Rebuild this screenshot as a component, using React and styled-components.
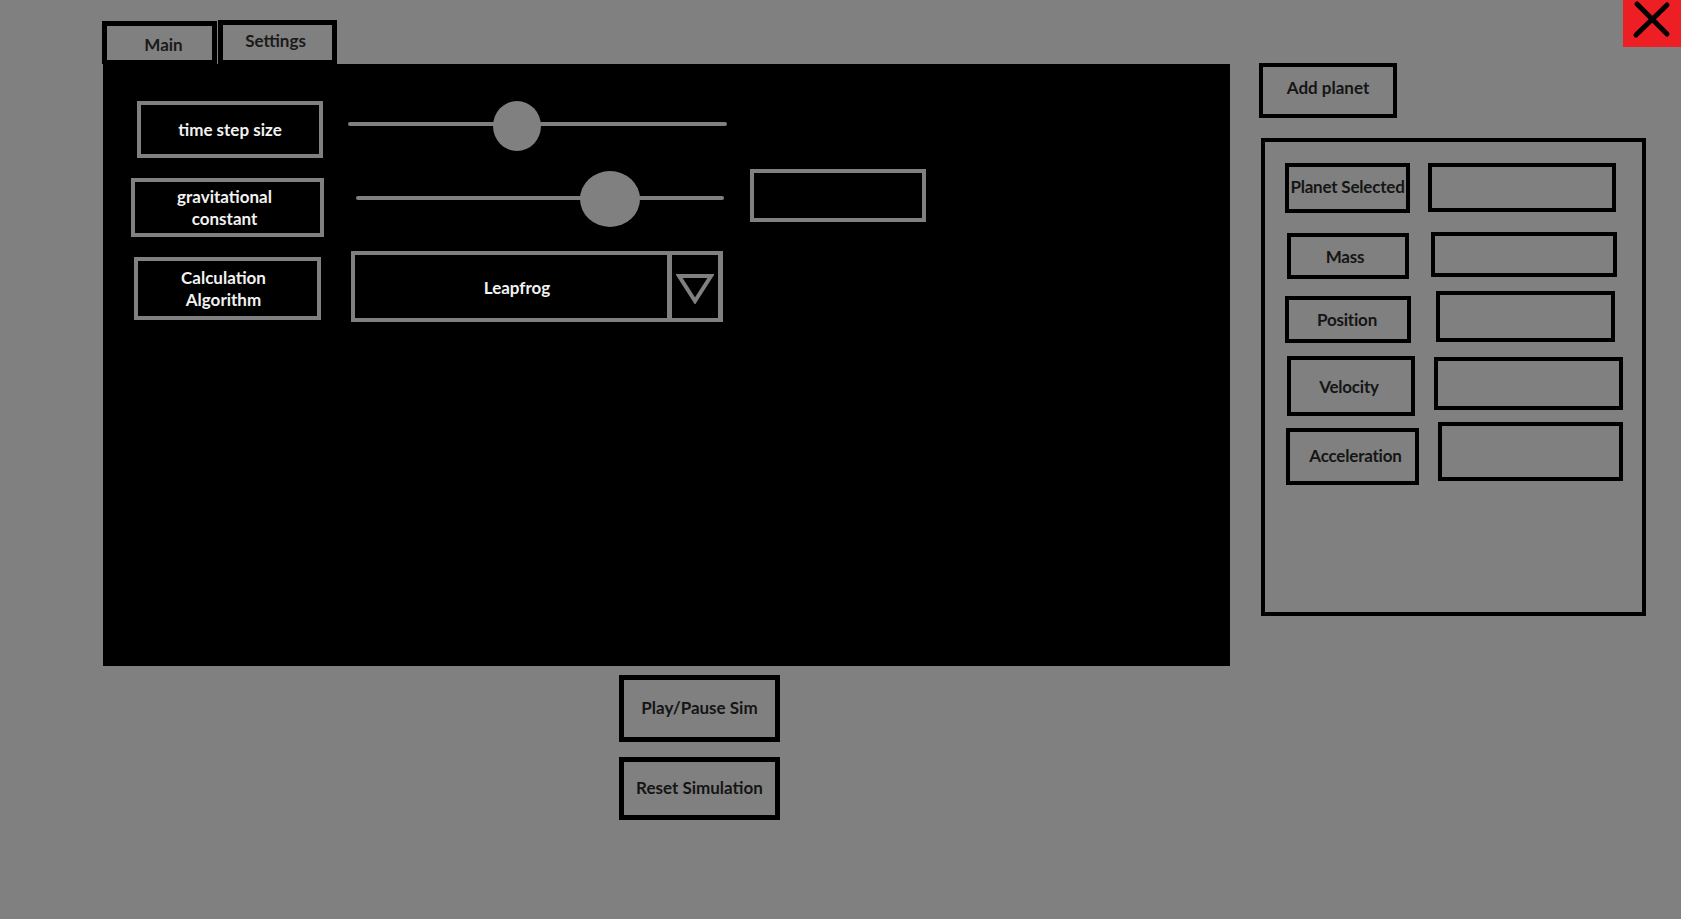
import React from "react";
import styled, { createGlobalStyle } from "styled-components";

const GlobalStyle = createGlobalStyle`
  body {
    margin: 0;
    background: #808080;
    font-family: "Lato", "Open Sans", "Liberation Sans", sans-serif;
  }
`;

const planetRows = [
  { name: "Planet Selected", ml: 20, mt: 0, lw: 125, lh: 50, lmt: 0, gap: 18, iw: 188, ih: 49, imt: 0, tx: 0, ty: -2 },
  { name: "Mass", ml: 22, mt: 19, lw: 122, lh: 46, lmt: 1, gap: 22, iw: 186, ih: 45, imt: 0, tx: -3, ty: 0 },
  { name: "Position", ml: 20, mt: 12, lw: 126, lh: 47, lmt: 5, gap: 25, iw: 179, ih: 51, imt: 0, tx: -1, ty: 0 },
  { name: "Velocity", ml: 22, mt: 13, lw: 128, lh: 60, lmt: 0, gap: 19, iw: 189, ih: 53, imt: 1, tx: -2, ty: 0 },
  { name: "Acceleration", ml: 21, mt: 6, lw: 133, lh: 57, lmt: 6, gap: 19, iw: 185, ih: 59, imt: 0, tx: 3, ty: -1 }
];

class App extends React.Component {
  state = {
    tab: "Main"
  };

  render() {
    return (
      <Screen>
        <GlobalStyle />
        <LeftColumn>
          <TabRow>
            <Tab $w={115} $h={43} onClick={() => this.setState({ tab: "Main" })}>
              <TabText $dx={4} $dy={1}>Main</TabText>
            </Tab>
            <Tab $w={119} $h={44} onClick={() => this.setState({ tab: "Settings" })}>
              <TabText $dx={-2} $dy={-2}>Settings</TabText>
            </Tab>
          </TabRow>

          <Panel>
            <ControlRow $mt={0}>
              <DarkLabel $ml={34} $w={186} $h={57} $mt={0}>time step size</DarkLabel>
              <Slider $ml={25} $w={379} $h={50} $mt={0}>
                <Track $top={21} />
                <Knob style={{ left: 145 }} $w={48} $h={50} />
              </Slider>
            </ControlRow>

            <ControlRow $mt={11}>
              <DarkLabel $ml={28} $w={193} $h={59} $mt={9} $tx={-3}>
                gravitational
                <br />
                constant
              </DarkLabel>
              <Slider $ml={32} $w={368} $h={56} $mt={2}>
                <Track $top={25} />
                <Knob style={{ left: 224 }} $w={60} $h={56} />
              </Slider>
              <ValueBox $ml={26} />
            </ControlRow>

            <ControlRow $mt={14}>
              <DarkLabel $ml={31} $w={187} $h={63} $mt={6} $tx={-4}>
                Calculation
                <br />
                Algorithm
              </DarkLabel>
              <Dropdown>
                <DropdownValue>Leapfrog</DropdownValue>
                <DropdownArrow>
                  <svg width="38" height="31" viewBox="0 0 38 31">
                    <polygon
                      points="3,3 35,3 19,28"
                      fill="none"
                      stroke="#808080"
                      strokeWidth="4"
                    />
                  </svg>
                </DropdownArrow>
              </Dropdown>
            </ControlRow>
          </Panel>

          <SimButtons>
            <OutlineButton $w={161} $h={67} $bw={5}>Play/Pause Sim</OutlineButton>
            <OutlineButton $w={161} $h={63} $bw={5}>Reset Simulation</OutlineButton>
          </SimButtons>
        </LeftColumn>

        <RightColumn>
          <OutlineButton $w={138} $h={55} $bw={4} $pb={6}>Add planet</OutlineButton>
          <PlanetPanel>
            {planetRows.map(r => (
              <PlanetRow key={r.name} $ml={r.ml} $mt={r.mt}>
                <PlanetLabel $w={r.lw} $h={r.lh} $mt={r.lmt}>
                  <Nudge $dx={r.tx} $dy={r.ty}>{r.name}</Nudge>
                </PlanetLabel>
                <PlanetInput $ml={r.gap} $w={r.iw} $h={r.ih} $mt={r.imt} />
              </PlanetRow>
            ))}
          </PlanetPanel>
        </RightColumn>

        <CloseButton>
          <svg width="58" height="47" viewBox="0 0 58 47">
            <line x1="14" y1="4" x2="44" y2="34" stroke="#000" strokeWidth="5" strokeLinecap="round" />
            <line x1="44" y1="5" x2="13" y2="35" stroke="#000" strokeWidth="5" strokeLinecap="round" />
          </svg>
        </CloseButton>
      </Screen>
    );
  }
}

export default App;

const Screen = styled.div`
  position: relative;
  display: flex;
  width: 1681px;
  height: 919px;
  background: #808080;
  overflow: hidden;
`;

const LeftColumn = styled.div`
  display: flex;
  flex-direction: column;
  padding-left: 102px;
  padding-top: 20px;
`;

const TabRow = styled.div`
  display: flex;
  align-items: flex-end;
  gap: 1px;
`;

const Tab = styled.div`
  box-sizing: border-box;
  width: ${p => p.$w}px;
  height: ${p => p.$h}px;
  border: 5px solid #000;
  border-bottom-width: 4px;
  background: #808080;
  display: flex;
  align-items: center;
  justify-content: center;
  cursor: pointer;
`;

const TabText = styled.span`
  font-size: 17px;
  font-weight: 700;
  color: #1a1a1a;
  position: relative;
  left: ${p => p.$dx}px;
  top: ${p => p.$dy}px;
`;

const Panel = styled.div`
  box-sizing: border-box;
  margin-left: 1px;
  width: 1127px;
  height: 602px;
  background: #000;
  padding-top: 37px;
  display: flex;
  flex-direction: column;
`;

const ControlRow = styled.div`
  display: flex;
  align-items: flex-start;
  margin-top: ${p => p.$mt}px;
`;

const DarkLabel = styled.div`
  box-sizing: border-box;
  margin-left: ${p => p.$ml}px;
  margin-top: ${p => p.$mt}px;
  width: ${p => p.$w}px;
  height: ${p => p.$h}px;
  border: 4px solid #808080;
  padding-right: ${p => (p.$tx ? -p.$tx * 2 : 0)}px;
  color: #f2f2f2;
  font-size: 17px;
  font-weight: 700;
  line-height: 22px;
  text-align: center;
  display: flex;
  align-items: center;
  justify-content: center;
`;

const Slider = styled.div`
  position: relative;
  margin-left: ${p => p.$ml}px;
  margin-top: ${p => p.$mt}px;
  width: ${p => p.$w}px;
  height: ${p => p.$h}px;
`;

const Track = styled.div`
  position: absolute;
  left: 0;
  right: 0;
  top: ${p => p.$top}px;
  height: 4px;
  border-radius: 2px;
  background: #808080;
`;

const Knob = styled.div`
  position: absolute;
  top: 0;
  width: ${p => p.$w}px;
  height: ${p => p.$h}px;
  border-radius: 50%;
  background: #808080;
`;

const ValueBox = styled.div`
  box-sizing: border-box;
  margin-left: ${p => p.$ml}px;
  width: 176px;
  height: 53px;
  border: 4px solid #808080;
`;

const Dropdown = styled.div`
  box-sizing: border-box;
  margin-left: 30px;
  width: 372px;
  height: 71px;
  border: 4px solid #808080;
  border-right-width: 5px;
  display: flex;
`;

const DropdownValue = styled.div`
  flex: 1;
  display: flex;
  align-items: center;
  justify-content: center;
  padding-left: 12px;
  padding-top: 1px;
  color: #f2f2f2;
  font-size: 17px;
  font-weight: 700;
`;

const DropdownArrow = styled.div`
  width: 46px;
  border-left: 5px solid #808080;
  display: flex;
  align-items: center;
  justify-content: center;
  padding-top: 3px;
`;

const SimButtons = styled.div`
  display: flex;
  flex-direction: column;
  gap: 15px;
  margin-left: 517px;
  margin-top: 9px;
`;

const OutlineButton = styled.button`
  box-sizing: border-box;
  width: ${p => p.$w}px;
  height: ${p => p.$h}px;
  border: ${p => p.$bw}px solid #000;
  background: #808080;
  color: #151515;
  font-family: "Lato", "Open Sans", "Liberation Sans", sans-serif;
  font-size: 17px;
  font-weight: 700;
  padding: 0 0 ${p => p.$pb || 3}px;
  cursor: pointer;
`;

const RightColumn = styled.div`
  display: flex;
  flex-direction: column;
  margin-left: 29px;
  padding-top: 63px;
  gap: 20px;
`;

const PlanetPanel = styled.div`
  box-sizing: border-box;
  margin-left: 2px;
  width: 385px;
  height: 478px;
  border: 4px solid #000;
  padding-top: 21px;
  display: flex;
  flex-direction: column;
`;

const PlanetRow = styled.div`
  display: flex;
  align-items: flex-start;
  margin-left: ${p => p.$ml}px;
  margin-top: ${p => p.$mt}px;
`;

const PlanetLabel = styled.div`
  box-sizing: border-box;
  width: ${p => p.$w}px;
  height: ${p => p.$h}px;
  margin-top: ${p => p.$mt}px;
  border: 4px solid #000;
  color: #151515;
  font-size: 17px;
  font-weight: 700;
  white-space: nowrap;
  display: flex;
  align-items: center;
  justify-content: center;
  overflow: visible;
`;

const Nudge = styled.span`
  position: relative;
  left: ${p => p.$dx}px;
  top: ${p => p.$dy}px;
  letter-spacing: -0.2px;
`;

const PlanetInput = styled.div`
  box-sizing: border-box;
  margin-left: ${p => p.$ml}px;
  margin-top: ${p => p.$mt}px;
  width: ${p => p.$w}px;
  height: ${p => p.$h}px;
  border: 4px solid #000;
`;

const CloseButton = styled.div`
  position: absolute;
  top: 0;
  right: 0;
  width: 58px;
  height: 47px;
  background: #ee1f24;
  display: flex;
`;
